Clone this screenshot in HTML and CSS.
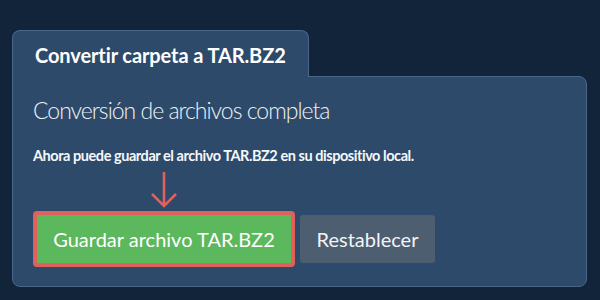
FILE: index.html
```html
<!DOCTYPE html>
<html lang="es">
<head>
<meta charset="utf-8">
<link rel="stylesheet" href="styles.css">
</head>
<body>
<div class="wrap">
  <div class="tab">Convertir carpeta a TAR.BZ2</div>
  <div class="panel">
    <h2 class="title">Conversión de archivos completa</h2>
    <p class="info">Ahora puede guardar el archivo TAR.BZ2 en su dispositivo local.</p>
    <div class="arrow-row">
      <svg class="arrow" width="28" height="38" viewBox="0 0 28 38">
        <path d="M14 1 V35 M2 23 L14 35 L26 23" fill="none" stroke="#e0605c" stroke-width="2.6"/>
      </svg>
    </div>
    <div class="actions">
      <button class="btn btn-save">Guardar archivo TAR.BZ2</button>
      <button class="btn btn-reset">Restablecer</button>
    </div>
  </div>
</div>
</body>
</html>
```
FILE: styles.css
```css
html, body {
  margin: 0;
  padding: 0;
  background: #12243a;
  font-family: Lato, "Liberation Sans", sans-serif;
}
.wrap {
  padding: 30px 13px 0 12px;
}
.tab {
  display: inline-block;
  box-sizing: border-box;
  width: 297px;
  height: 47px;
  padding: 12px 0 0 22px;
  background: #2d4a6b;
  border: 1px solid #4a6688;
  border-bottom: none;
  border-radius: 8px 8px 0 0;
  color: #ffffff;
  font-weight: 700;
  font-size: 20px;
  letter-spacing: -0.1px;
  line-height: 24px;
  position: relative;
  z-index: 1;
  vertical-align: top;
}
.panel {
  box-sizing: border-box;
  height: 211px;
  margin-top: -1px;
  background: #2d4a6b;
  border: 1px solid #4a6688;
  border-radius: 0 8px 8px 8px;
  padding: 19px 20px 0 20px;
}
.title {
  margin: 0;
  font-weight: 300;
  font-size: 23px;
  letter-spacing: -1px;
  line-height: 28px;
  color: #eef1f5;
}
.info {
  margin: 23px 0 0 0;
  font-weight: 700;
  font-size: 14.5px;
  letter-spacing: -0.45px;
  line-height: 18px;
  color: #f5f7f9;
}
.arrow-row {
  height: 40px;
  padding-left: 117px;
  margin-top: 6px;
}
.arrow {
  display: block;
}
.actions {
  display: flex;
  align-items: center;
  gap: 5px;
}
.btn {
  font-family: Lato, "Liberation Sans", sans-serif;
  font-size: 20px;
  color: #ffffff;
  border: none;
  border-radius: 3px;
  cursor: pointer;
}
.btn-save {
  box-sizing: border-box;
  width: 262px;
  height: 56px;
  background: #5cb85c;
  border: 4px solid #e0605c;
  border-radius: 4px;
  padding: 0;
}
.btn-reset {
  box-sizing: border-box;
  width: 135px;
  height: 48px;
  background: #4d5e71;
  padding: 0;
  color: #f2f4f6;
}
```
